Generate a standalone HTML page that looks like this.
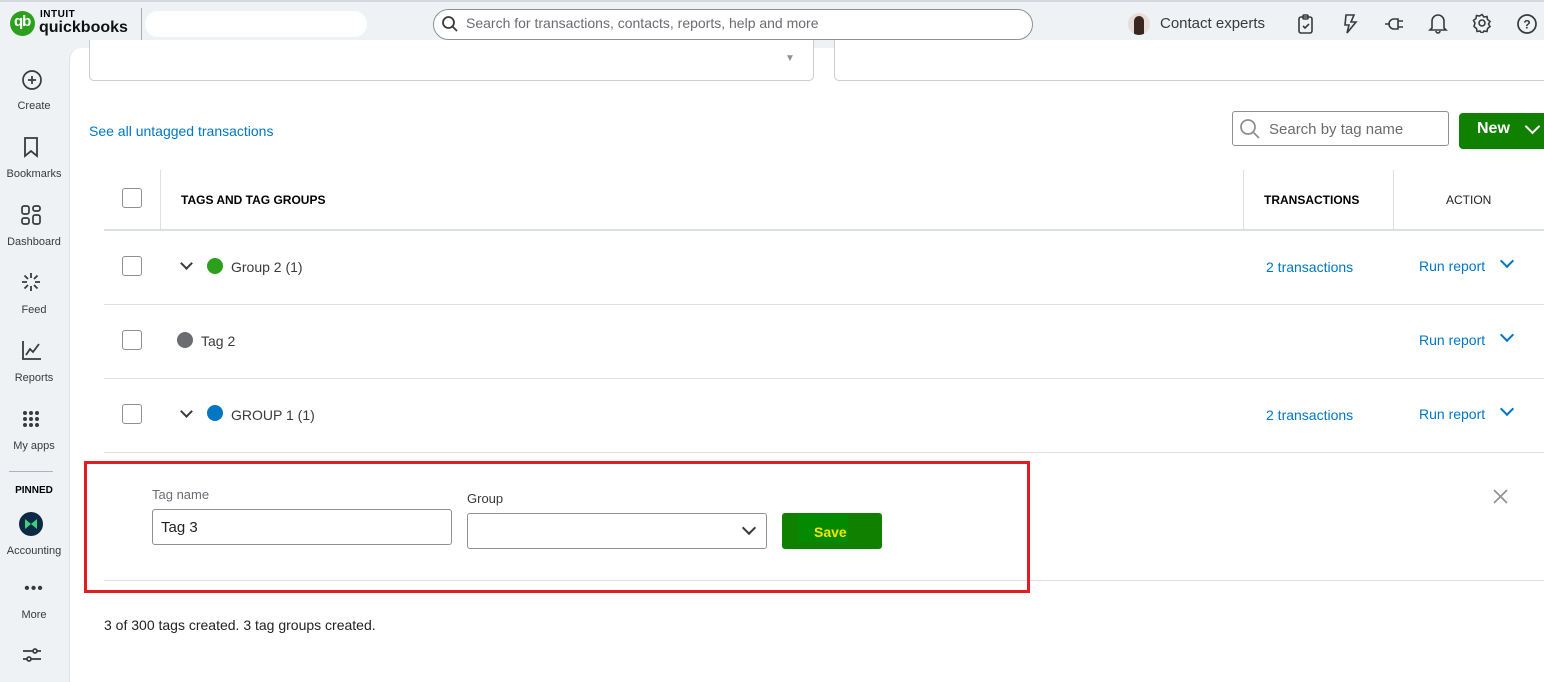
<!DOCTYPE html>
<html><head><meta charset="utf-8"><style>
*{box-sizing:border-box;margin:0;padding:0}
body{width:1544px;height:682px;overflow:hidden;background:#eff2f5;font-family:"Liberation Sans",Arial,sans-serif;position:relative;color:#393a3d}
.a{position:absolute}
.top{left:0;top:0;width:1544px;height:48px;background:#eff2f5;border-top:2px solid #d4d7dc}
.main{left:69px;top:48px;width:1475px;height:634px;background:#fff;border-top-left-radius:12px;border-left:1px solid #dfe2e6}
.side{font-size:11px;color:#393a3d;width:68px;text-align:center;left:0}
.cb{width:20px;height:20px;border:1px solid #8d9096;border-radius:3px;background:#fff}
.hl{height:1px;background:#dcdfe3}
.link{color:#0077c5;font-size:14px}
.dot{width:16px;height:16px;border-radius:50%}
.chev{width:9px;height:9px;border-right:2px solid #393a3d;border-bottom:2px solid #393a3d;transform:rotate(45deg)}
.bchev{width:10px;height:10px;border-right:2px solid #0077c5;border-bottom:2px solid #0077c5;transform:rotate(45deg)}
.th{font-size:12px;font-weight:bold;color:#000}
</style></head><body>
<div class="a top"></div>
<div class="a" style="left:10px;top:11px;width:25px;height:25px;border-radius:50%;background:#2ca01c"></div>
<div class="a" style="left:14px;top:13px;color:#fff;font-weight:bold;font-size:15px;letter-spacing:-1px">qb</div>
<div class="a" style="left:40px;top:9px;font-size:10px;font-weight:bold;color:#000;letter-spacing:0.5px">INTUIT</div>
<div class="a" style="left:39px;top:19px;font-size:16px;font-weight:bold;color:#111">quickbooks</div>
<div class="a" style="left:141px;top:8px;width:1px;height:32px;background:#aaa"></div>
<div class="a" style="left:145px;top:11px;width:222px;height:26px;background:#fff;border-radius:13px"></div>
<div class="a" style="left:433px;top:9px;width:600px;height:31px;border:1px solid #8d9096;border-radius:16px;background:#fff"></div>
<svg class="a" style="left:441px;top:15px" width="18" height="18" viewBox="0 0 18 18"><circle cx="7.5" cy="7.5" r="5.5" fill="none" stroke="#393a3d" stroke-width="1.8"/><path d="M11.5 11.5L16 16" stroke="#393a3d" stroke-width="1.8"/></svg>
<div class="a" style="left:466px;top:15px;font-size:14px;color:#6b6c72">Search for transactions, contacts, reports, help and more</div>
<div class="a" style="left:1128px;top:13px;width:22px;height:22px;border-radius:50%;background:#e8dcd6;overflow:hidden"><div style="margin:3px 0 0 6px;width:10px;height:19px;background:#3a2620;border-radius:5px 5px 0 0"></div></div>
<div class="a" style="left:1160px;top:15px;font-size:15px;color:#393a3d">Contact experts</div>
<svg class="a" style="left:1296px;top:13px" width="20" height="22" viewBox="0 0 20 22" fill="none" stroke="#393a3d" stroke-width="1.6"><rect x="3" y="4" width="13" height="16" rx="2"/><rect x="7" y="2" width="5" height="4" rx="1"/><path d="M7 13l2 2 4-4"/></svg>
<svg class="a" style="left:1341px;top:13px" width="18" height="22" viewBox="0 0 18 22" fill="none" stroke="#393a3d" stroke-width="1.6"><path d="M5 2h8l-3 7h5L6 20l2-8H4z"/></svg>
<svg class="a" style="left:1384px;top:14px" width="22" height="20" viewBox="0 0 22 20" fill="none" stroke="#393a3d" stroke-width="1.6"><path d="M1 10h5M14 5h-4a5 5 0 000 10h4zM14 7h5M14 13h5"/></svg>
<svg class="a" style="left:1428px;top:12px" width="20" height="22" viewBox="0 0 20 22" fill="none" stroke="#393a3d" stroke-width="1.6"><path d="M4 16V9a6 6 0 0112 0v7l2 2H2zM8 19a2 2 0 004 0"/></svg>
<svg class="a" style="left:1472px;top:13px" width="20" height="20" viewBox="0 0 20 20" fill="none" stroke="#393a3d" stroke-width="1.6"><circle cx="10" cy="10" r="3"/><path d="M10 1.5l2 2.5 3-.5.5 3 2.5 2-1.5 2.5 1.5 2.5-2.5 2-.5 3-3-.5-2 2.5-2-2.5-3 .5-.5-3-2.5-2L3 10 1.5 7.5 4 5.5l.5-3 3 .5z"/></svg>
<svg class="a" style="left:1516px;top:13px" width="22" height="22" viewBox="0 0 22 22" fill="none" stroke="#393a3d" stroke-width="1.7"><circle cx="11" cy="11" r="9"/><text x="11" y="15.5" text-anchor="middle" font-size="12" font-weight="bold" fill="#393a3d" stroke="none" font-family="Liberation Sans">?</text></svg>
<svg class="a" style="left:21px;top:69px" width="22" height="22" viewBox="0 0 22 22" fill="none" stroke="#393a3d" stroke-width="1.7"><circle cx="11" cy="11" r="9"/><path d="M11 7v8M7 11h8"/></svg>
<div class="a side" style="top:100px">Create</div>
<svg class="a" style="left:22px;top:136px" width="18" height="22" viewBox="0 0 18 22" fill="none" stroke="#393a3d" stroke-width="1.8"><path d="M3 2h12v18l-6-5-6 5z"/></svg>
<div class="a side" style="top:168px">Bookmarks</div>
<svg class="a" style="left:21px;top:205px" width="21" height="21" viewBox="0 0 21 21" fill="none" stroke="#393a3d" stroke-width="1.7"><rect x="1" y="1" width="7" height="8" rx="2"/><rect x="12" y="1" width="7" height="5" rx="2"/><rect x="1" y="13" width="7" height="6" rx="2"/><rect x="12" y="10" width="7" height="9" rx="2"/></svg>
<div class="a side" style="top:236px">Dashboard</div>
<svg class="a" style="left:21px;top:272px" width="20" height="20" viewBox="0 0 20 20" fill="none" stroke="#393a3d" stroke-width="1.8"><path d="M10 1v5M10 14v5M1 10h5M14 10h5M3.5 3.5l3.5 3.5M13 13l3.5 3.5M16.5 3.5L13 7M7 13l-3.5 3.5"/></svg>
<div class="a side" style="top:304px">Feed</div>
<svg class="a" style="left:21px;top:340px" width="21" height="21" viewBox="0 0 21 21" fill="none" stroke="#393a3d" stroke-width="1.8"><path d="M2 1v18h18M5 15l4-6 3 3 6-8"/></svg>
<div class="a side" style="top:372px">Reports</div>
<svg class="a" style="left:22px;top:410px" width="18" height="18" viewBox="0 0 18 18" fill="#393a3d"><circle cx="3" cy="3" r="2"/><circle cx="9" cy="3" r="2"/><circle cx="15" cy="3" r="2"/><circle cx="3" cy="9" r="2"/><circle cx="9" cy="9" r="2"/><circle cx="15" cy="9" r="2"/><circle cx="3" cy="15" r="2"/><circle cx="9" cy="15" r="2"/><circle cx="15" cy="15" r="2"/></svg>
<div class="a side" style="top:440px">My apps</div>
<div class="a" style="left:9px;top:471px;width:44px;height:1px;background:#b0b4ba"></div>
<div class="a side" style="top:485px;font-size:10px;font-weight:bold;color:#000">PINNED</div>
<div class="a" style="left:19px;top:512px;width:24px;height:24px;border-radius:50%;background:#0d2a44"></div>
<svg class="a" style="left:24px;top:518px" width="14" height="12" viewBox="0 0 14 12"><path d="M1 1l6 5 6-5v10l-6-5-6 5z" fill="#3fd07a"/></svg>
<div class="a side" style="top:545px">Accounting</div>
<div class="a side" style="top:580px;font-size:16px;letter-spacing:1px">•••</div>
<div class="a side" style="top:609px">More</div>
<svg class="a" style="left:22px;top:647px" width="20" height="16" viewBox="0 0 20 16" fill="none" stroke="#393a3d" stroke-width="1.7"><path d="M1 4h18M1 12h18"/><circle cx="13" cy="4" r="2" fill="#eff2f5"/><circle cx="7" cy="12" r="2" fill="#eff2f5"/></svg>
<div class="a main"></div>
<div class="a" style="left:89px;top:40px;width:725px;height:41px;border:1px solid #c9ccd1;border-top:none;border-radius:0 0 5px 5px;background:#fff"></div>
<div class="a" style="left:785px;top:53px;font-size:10px;color:#8d9096">▼</div>
<div class="a" style="left:834px;top:40px;width:720px;height:41px;border:1px solid #c9ccd1;border-top:none;border-radius:0 0 5px 5px;background:#fff"></div>
<div class="a link" style="left:89px;top:123px;font-size:14px">See all untagged transactions</div>
<div class="a" style="left:1232px;top:111px;width:217px;height:35px;border:1px solid #8d9096;border-radius:3px"></div>
<svg class="a" style="left:1239px;top:118px" width="22" height="22" viewBox="0 0 22 22" fill="none" stroke="#8d9096" stroke-width="1.8"><circle cx="9" cy="9" r="7"/><path d="M14 14l6 6"/></svg>
<div class="a" style="left:1269px;top:121px;font-size:15px;color:#6b6c72">Search by tag name</div>
<div class="a" style="left:1459px;top:113px;width:90px;height:36px;background:#108000;border-radius:4px"></div>
<div class="a" style="left:1477px;top:120px;font-size:16px;font-weight:bold;color:#fff">New</div>
<div class="a" style="left:1527px;top:121px;width:11px;height:11px;border-right:2px solid #fff;border-bottom:2px solid #fff;transform:rotate(45deg)"></div>
<div class="a cb" style="left:122px;top:188px"></div>
<div class="a" style="left:160px;top:170px;width:1px;height:59px;background:#dcdfe3"></div>
<div class="a th" style="left:181px;top:193px">TAGS AND TAG GROUPS</div>
<div class="a" style="left:1243px;top:170px;width:1px;height:59px;background:#dcdfe3"></div>
<div class="a th" style="left:1264px;top:193px">TRANSACTIONS</div>
<div class="a" style="left:1393px;top:170px;width:1px;height:59px;background:#dcdfe3"></div>
<div class="a th" style="left:1446px;top:193px;font-weight:normal;color:#222">ACTION</div>
<div class="a" style="left:104px;top:229px;width:1440px;height:2px;background:#dcdfe3"></div>
<div class="a cb" style="left:122px;top:256px"></div>
<div class="a chev" style="left:182px;top:259px"></div>
<div class="a dot" style="left:207px;top:258px;background:#2ca01c"></div>
<div class="a" style="left:231px;top:259px;font-size:14px">Group 2 (1)</div>
<div class="a link" style="left:1266px;top:259px">2 transactions</div>
<div class="a link" style="left:1419px;top:258px">Run report</div>
<div class="a bchev" style="left:1502px;top:256px"></div>
<div class="a hl" style="left:104px;top:304px;width:1440px"></div>
<div class="a cb" style="left:122px;top:330px"></div>
<div class="a dot" style="left:177px;top:332px;background:#6b6c72"></div>
<div class="a" style="left:201px;top:333px;font-size:14px">Tag 2</div>
<div class="a link" style="left:1419px;top:332px">Run report</div>
<div class="a bchev" style="left:1502px;top:330px"></div>
<div class="a hl" style="left:104px;top:378px;width:1440px"></div>
<div class="a cb" style="left:122px;top:404px"></div>
<div class="a chev" style="left:182px;top:407px"></div>
<div class="a dot" style="left:207px;top:405px;background:#0077c5"></div>
<div class="a" style="left:231px;top:407px;font-size:14px">GROUP 1 (1)</div>
<div class="a link" style="left:1266px;top:407px">2 transactions</div>
<div class="a link" style="left:1419px;top:406px">Run report</div>
<div class="a bchev" style="left:1502px;top:404px"></div>
<div class="a hl" style="left:104px;top:452px;width:1440px"></div>
<div class="a" style="left:152px;top:487px;font-size:13px;color:#6b6c72">Tag name</div>
<div class="a" style="left:152px;top:509px;width:300px;height:36px;border:1px solid #8d9096;border-radius:3px"></div>
<div class="a" style="left:161px;top:519px;font-size:15px;color:#222">Tag 3</div>
<div class="a" style="left:467px;top:491px;font-size:13px;color:#393a3d">Group</div>
<div class="a" style="left:467px;top:513px;width:300px;height:36px;border:1px solid #8d9096;border-radius:3px"></div>
<div class="a" style="left:744px;top:523px;width:10px;height:10px;border-right:2px solid #393a3d;border-bottom:2px solid #393a3d;transform:rotate(45deg)"></div>
<div class="a" style="left:782px;top:513px;width:100px;height:36px;background:#108000;border-radius:3px"></div>
<div class="a" style="left:798px;top:513px;width:50px;height:29px;background:#048a00"></div>
<div class="a" style="left:814px;top:524px;font-size:14px;font-weight:bold;color:#f5e400">Save</div>
<svg class="a" style="left:1493px;top:489px" width="15" height="15" viewBox="0 0 15 15" stroke="#8d9096" stroke-width="1.6"><path d="M1 1l13 13M14 1L1 14"/></svg>
<div class="a hl" style="left:104px;top:580px;width:1440px"></div>
<div class="a" style="left:84px;top:461px;width:946px;height:132px;border:3px solid #e31b23"></div>
<div class="a" style="left:104px;top:617px;font-size:14px;color:#222">3 of 300 tags created. 3 tag groups created.</div>
</body></html>
